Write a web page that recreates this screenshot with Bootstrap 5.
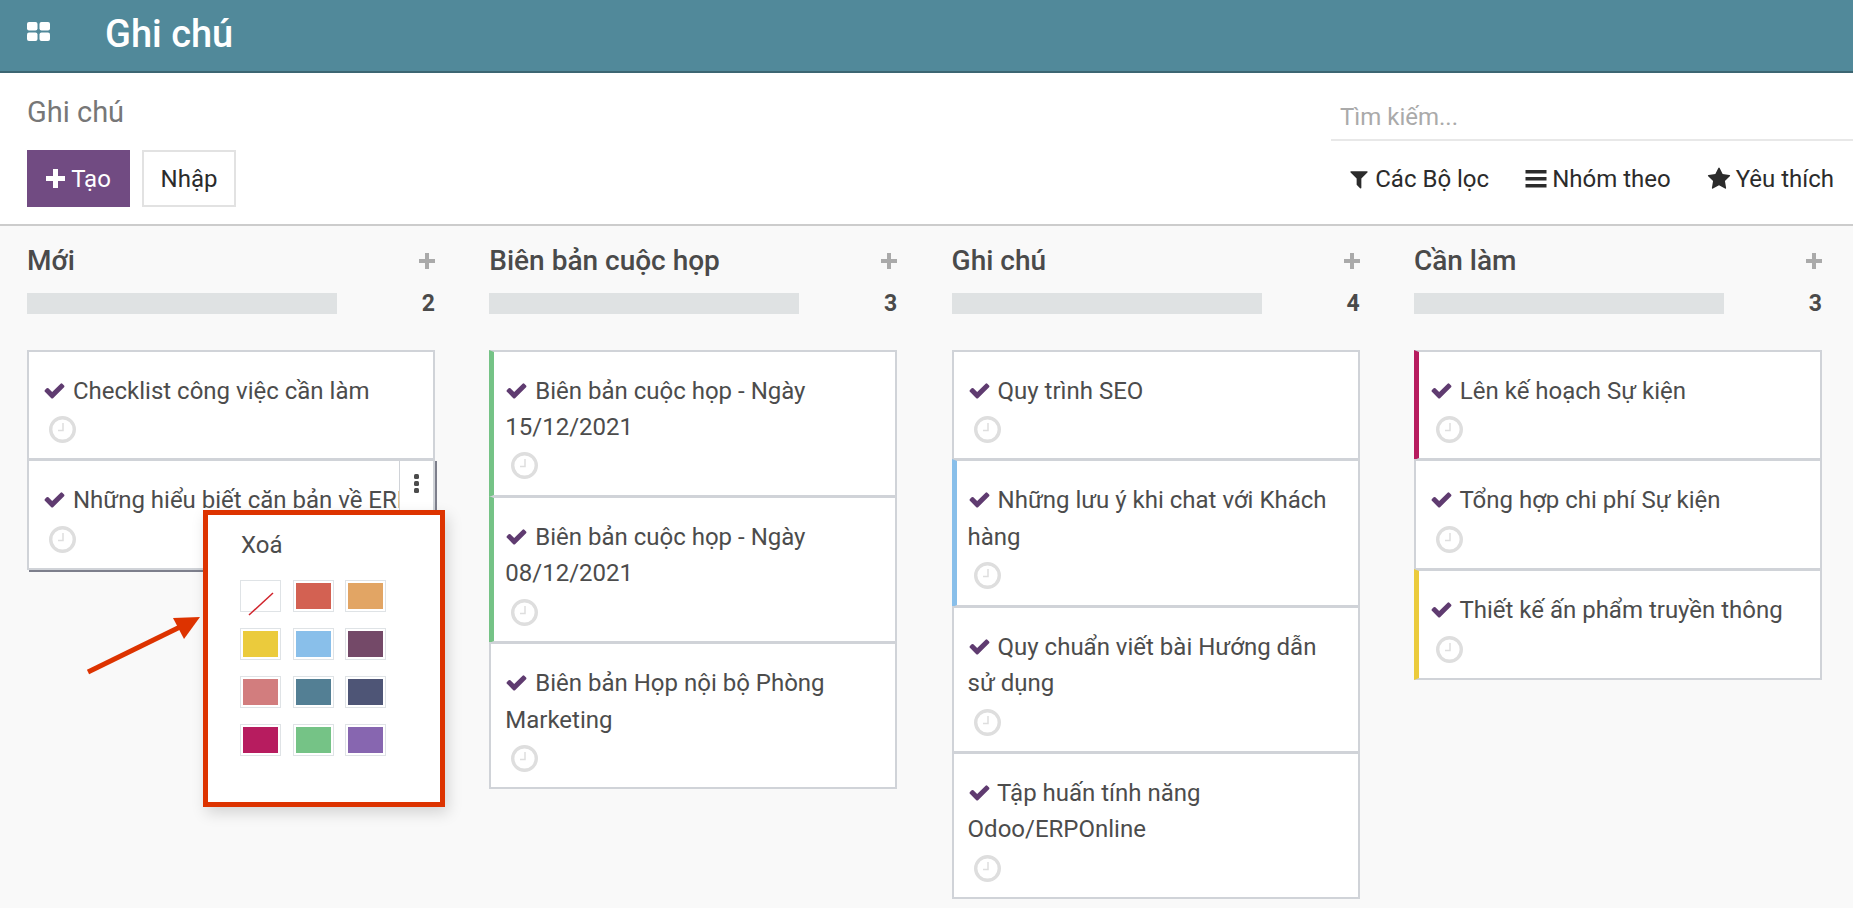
<!DOCTYPE html>
<html lang="vi">
<head>
<meta charset="utf-8">
<title>Ghi chú</title>
<link href="https://cdn.jsdelivr.net/npm/bootstrap@5.3.0/dist/css/bootstrap.min.css" rel="stylesheet">
<style>
html,body{height:908px;overflow:hidden}
body{font-family:Roboto,"Liberation Sans",sans-serif;background:#f9f9f9;color:#4c4c4c;font-size:24px}
.top-bar{height:73px;background:#51899a;border-bottom:2px solid #3c6672;padding:0 0 0 27px}
.apps-ico{width:23px;height:19px;margin-right:55px;margin-top:-9px}
.top-title{font-size:38px;font-weight:500;color:#fff;line-height:1;margin-top:-4px}
.ctrl{height:153px;background:#fff;border-bottom:2px solid #ccc;padding-left:27px}
.crumb{font-size:29px;color:#777;line-height:36px;padding-top:21px}
.btn-row{margin-top:20px}
.bt-main,.bt-alt{height:57px;border-radius:0;font-size:24px;display:flex;align-items:center;padding:0}
.bt-main,.bt-main:hover{background:#714b82;color:#fff;width:103px;justify-content:center;border:0;gap:6px}
.bt-alt,.bt-alt:hover{background:#fff;color:#2b2b2b;width:94px;justify-content:center;border:2px solid #e2e2e2}
.search-side{width:522px}
.search-field{height:68px;border-bottom:2px solid #e8e8e8;color:#aaa;font-size:24px;padding:26px 0 0 9px;line-height:36px}
.filter-row{height:76px;padding-right:19px;color:#2b2b2b;font-size:24px;gap:36px}
.filter-row span{display:flex;align-items:center;gap:5px}
.board{padding:0 0 0 27px;gap:54.300px}
.lane{width:408px;flex:none}
.lane-head{height:67px;padding-top:16px}
.lane-title{font-size:28px;font-weight:500;color:#4a4a4a;line-height:38px}
.plus-ico{margin-top:11px}
.lane-prog{height:21px;margin-bottom:35.500px}
.prog-track{width:310px;background:#dfe2e3}
.prog-num{font-size:23px;font-weight:700;color:#4a4a4a;line-height:21px}
.note{background:#fff;border:2px solid #d0d3d8;margin-bottom:-1px;padding:21px 14px 13.500px;position:relative;line-height:36.400px;color:#4c4c4c}
.note-tint{border-left-width:5px;padding-left:11px}
.tint-green{border-left-color:#75c386}
.tint-blue{border-left-color:#89bfea}
.tint-pink{border-left-color:#b71c5f}
.tint-yellow{border-left-color:#ebcb3c}
.note-hot{box-shadow:2px 2px 0 #7d7f8c}
.tick{width:23px;height:23px;margin-right:1px;vertical-align:-3px;fill:#5f3b70}
.clock{width:27px;height:27px;display:block;margin:7px 0 2px 6px}
.kebab{position:absolute;top:0;right:0;width:34px;height:58px;background:#fff;border-left:1px solid #d0d3d8;display:flex;flex-direction:column;align-items:center;padding-top:13px;gap:2px}
.kebab i{width:5px;height:5px;border-radius:1.500px;background:#4c4c4c;display:block}
.pop{position:absolute;left:174px;top:49px;width:242px;height:297px;background:#fff;border:5px solid #dd3300;box-shadow:3px 6px 14px rgba(0,0,0,.15);padding:12px 0 0 32px;z-index:5;line-height:36px}
.pop-del{margin-bottom:17px;padding-left:1px}
.swatches{display:grid;grid-template-columns:repeat(3,41px);grid-auto-rows:32px;column-gap:11.500px;row-gap:16px}
.swatch{border:1px solid #dfe3e6;padding:2px;background:#fff}
.swatch b{display:block;height:100%}
.arrow-mark{position:absolute;left:80px;top:610px;width:125px;height:70px;z-index:6}
</style>
</head>
<body>
<nav class="navbar top-bar d-flex justify-content-start align-items-center flex-nowrap">
  <svg class="apps-ico" viewBox="0 0 23 19"><rect width="10.500" height="8.500" rx="2" fill="#fff"/><rect x="12.500" width="10.500" height="8.500" rx="2" fill="#fff"/><rect y="10.500" width="10.500" height="8.500" rx="2" fill="#fff"/><rect x="12.500" y="10.500" width="10.500" height="8.500" rx="2" fill="#fff"/></svg>
  <div class="top-title">Ghi chú</div>
</nav>
<div class="ctrl d-flex justify-content-between">
  <div>
    <div class="crumb">Ghi chú</div>
    <div class="btn-row d-flex gap-2">
      <button class="btn bt-main"><svg width="19" height="19" viewBox="0 0 19 19"><path d="M7 0h5v7h7v5h-7v7H7v-7H0V7h7z" fill="#fff"/></svg>Tạo</button>
      <button class="btn bt-alt ms-1">Nhập</button>
    </div>
  </div>
  <div class="search-side">
    <div class="search-field">Tìm kiếm...</div>
    <div class="filter-row d-flex justify-content-end align-items-center">
      <span><svg width="22" height="22" viewBox="0 0 1792 1792" fill="#2b2b2b"><path d="M1595 295q17 41-14 70l-493 493v742q0 42-39 59-13 5-25 5-27 0-45-19l-256-256q-19-19-19-45v-486l-493-493q-31-29-14-70 17-39 59-39h1280q42 0 59 39z"/></svg>Các Bộ lọc</span>
      <span><svg width="22" height="18" viewBox="0 0 21 18" fill="#2b2b2b"><rect width="21" height="3.500"/><rect y="7" width="21" height="3.500"/><rect y="14" width="21" height="3.500"/></svg>Nhóm theo</span>
      <span><svg width="24" height="24" viewBox="0 0 1792 1792" fill="#2b2b2b"><path d="M1728 647q0 22-26 48l-363 354 86 500q1 7 1 20 0 21-10.500 35.500t-30.500 14.500q-19 0-40-12l-449-236-449 236q-22 12-40 12-21 0-31.500-14.500t-10.500-35.500q0-6 2-20l86-500-364-354q-25-27-25-48 0-37 56-46l502-73 225-455q19-41 49-41t49 41l225 455 502 73q56 9 56 46z"/></svg>Yêu thích</span>
    </div>
  </div>
</div>
<div class="board d-flex" id="board">
  <!-- lane 1 -->
  <section class="lane">
    <div class="lane-head d-flex justify-content-between align-items-start"><div class="lane-title">Mới</div><svg class="plus-ico" width="16" height="16" viewBox="0 0 16 16"><path d="M6 0h4v6h6v4h-6v6H6v-6H0V6h6z" fill="#aaa"/></svg></div>
    <div class="lane-prog d-flex justify-content-between"><div class="prog-track"></div><div class="prog-num">2</div></div>
    <div class="note"><svg class="tick" viewBox="0 0 1792 1792"><path d="M1671 566q0 40-28 68l-724 724-136 136q-28 28-68 28t-68-28l-136-136-362-362q-28-28-28-68t28-68l136-136q28-28 68-28t68 28l294 295 656-657q28-28 68-28t68 28l136 136q28 28 28 68z"/></svg> Checklist công việc cần làm<svg class="clock" viewBox="0 0 27 27"><circle cx="13.500" cy="13.500" r="11.800" fill="#fff" stroke="#dedede" stroke-width="3.400"/><path d="M14 7v7.500H9" fill="none" stroke="#dedede" stroke-width="1.500"/></svg></div>
    <div class="note note-hot"><svg class="tick" viewBox="0 0 1792 1792"><path d="M1671 566q0 40-28 68l-724 724-136 136q-28 28-68 28t-68-28l-136-136-362-362q-28-28-28-68t28-68l136-136q28-28 68-28t68 28l294 295 656-657q28-28 68-28t68 28l136 136q28 28 28 68z"/></svg> <span class="text-nowrap">Những hiểu biết căn bản về ERP</span><svg class="clock" viewBox="0 0 27 27"><circle cx="13.500" cy="13.500" r="11.800" fill="#fff" stroke="#dedede" stroke-width="3.400"/><path d="M14 7v7.500H9" fill="none" stroke="#dedede" stroke-width="1.500"/></svg>
      <div class="kebab"><i></i><i></i><i></i></div>
      <div class="pop">
        <div class="pop-del">Xoá</div>
        <div class="swatches">
          <div class="swatch"><svg width="100%" height="100%" viewBox="0 0 35 26" preserveAspectRatio="none"><path d="M6 25 L30 3" stroke="#d0232b" stroke-width="1.500"/></svg></div>
          <div class="swatch"><b style="background:#d36152"></b></div>
          <div class="swatch"><b style="background:#e2a564"></b></div>
          <div class="swatch"><b style="background:#ebcb3c"></b></div>
          <div class="swatch"><b style="background:#89bfea"></b></div>
          <div class="swatch"><b style="background:#744968"></b></div>
          <div class="swatch"><b style="background:#d27d7e"></b></div>
          <div class="swatch"><b style="background:#537f94"></b></div>
          <div class="swatch"><b style="background:#4e5576"></b></div>
          <div class="swatch"><b style="background:#b71c5f"></b></div>
          <div class="swatch"><b style="background:#75c386"></b></div>
          <div class="swatch"><b style="background:#8766b0"></b></div>
        </div>
      </div>
    </div>
  </section>
  <!-- lane 2 -->
  <section class="lane">
    <div class="lane-head d-flex justify-content-between align-items-start"><div class="lane-title">Biên bản cuộc họp</div><svg class="plus-ico" width="16" height="16" viewBox="0 0 16 16"><path d="M6 0h4v6h6v4h-6v6H6v-6H0V6h6z" fill="#aaa"/></svg></div>
    <div class="lane-prog d-flex justify-content-between"><div class="prog-track"></div><div class="prog-num">3</div></div>
    <div class="note note-tint tint-green"><svg class="tick" viewBox="0 0 1792 1792"><path d="M1671 566q0 40-28 68l-724 724-136 136q-28 28-68 28t-68-28l-136-136-362-362q-28-28-28-68t28-68l136-136q28-28 68-28t68 28l294 295 656-657q28-28 68-28t68 28l136 136q28 28 28 68z"/></svg> Biên bản cuộc họp - Ngày 15/12/2021<svg class="clock" viewBox="0 0 27 27"><circle cx="13.500" cy="13.500" r="11.800" fill="#fff" stroke="#dedede" stroke-width="3.400"/><path d="M14 7v7.500H9" fill="none" stroke="#dedede" stroke-width="1.500"/></svg></div>
    <div class="note note-tint tint-green"><svg class="tick" viewBox="0 0 1792 1792"><path d="M1671 566q0 40-28 68l-724 724-136 136q-28 28-68 28t-68-28l-136-136-362-362q-28-28-28-68t28-68l136-136q28-28 68-28t68 28l294 295 656-657q28-28 68-28t68 28l136 136q28 28 28 68z"/></svg> Biên bản cuộc họp - Ngày 08/12/2021<svg class="clock" viewBox="0 0 27 27"><circle cx="13.500" cy="13.500" r="11.800" fill="#fff" stroke="#dedede" stroke-width="3.400"/><path d="M14 7v7.500H9" fill="none" stroke="#dedede" stroke-width="1.500"/></svg></div>
    <div class="note"><svg class="tick" viewBox="0 0 1792 1792"><path d="M1671 566q0 40-28 68l-724 724-136 136q-28 28-68 28t-68-28l-136-136-362-362q-28-28-28-68t28-68l136-136q28-28 68-28t68 28l294 295 656-657q28-28 68-28t68 28l136 136q28 28 28 68z"/></svg> Biên bản Họp nội bộ Phòng Marketing<svg class="clock" viewBox="0 0 27 27"><circle cx="13.500" cy="13.500" r="11.800" fill="#fff" stroke="#dedede" stroke-width="3.400"/><path d="M14 7v7.500H9" fill="none" stroke="#dedede" stroke-width="1.500"/></svg></div>
  </section>
  <!-- lane 3 -->
  <section class="lane">
    <div class="lane-head d-flex justify-content-between align-items-start"><div class="lane-title">Ghi chú</div><svg class="plus-ico" width="16" height="16" viewBox="0 0 16 16"><path d="M6 0h4v6h6v4h-6v6H6v-6H0V6h6z" fill="#aaa"/></svg></div>
    <div class="lane-prog d-flex justify-content-between"><div class="prog-track"></div><div class="prog-num">4</div></div>
    <div class="note"><svg class="tick" viewBox="0 0 1792 1792"><path d="M1671 566q0 40-28 68l-724 724-136 136q-28 28-68 28t-68-28l-136-136-362-362q-28-28-28-68t28-68l136-136q28-28 68-28t68 28l294 295 656-657q28-28 68-28t68 28l136 136q28 28 28 68z"/></svg> Quy trình SEO<svg class="clock" viewBox="0 0 27 27"><circle cx="13.500" cy="13.500" r="11.800" fill="#fff" stroke="#dedede" stroke-width="3.400"/><path d="M14 7v7.500H9" fill="none" stroke="#dedede" stroke-width="1.500"/></svg></div>
    <div class="note note-tint tint-blue"><svg class="tick" viewBox="0 0 1792 1792"><path d="M1671 566q0 40-28 68l-724 724-136 136q-28 28-68 28t-68-28l-136-136-362-362q-28-28-28-68t28-68l136-136q28-28 68-28t68 28l294 295 656-657q28-28 68-28t68 28l136 136q28 28 28 68z"/></svg> Những lưu ý khi chat với Khách hàng<svg class="clock" viewBox="0 0 27 27"><circle cx="13.500" cy="13.500" r="11.800" fill="#fff" stroke="#dedede" stroke-width="3.400"/><path d="M14 7v7.500H9" fill="none" stroke="#dedede" stroke-width="1.500"/></svg></div>
    <div class="note"><svg class="tick" viewBox="0 0 1792 1792"><path d="M1671 566q0 40-28 68l-724 724-136 136q-28 28-68 28t-68-28l-136-136-362-362q-28-28-28-68t28-68l136-136q28-28 68-28t68 28l294 295 656-657q28-28 68-28t68 28l136 136q28 28 28 68z"/></svg> Quy chuẩn viết bài Hướng dẫn sử dụng<svg class="clock" viewBox="0 0 27 27"><circle cx="13.500" cy="13.500" r="11.800" fill="#fff" stroke="#dedede" stroke-width="3.400"/><path d="M14 7v7.500H9" fill="none" stroke="#dedede" stroke-width="1.500"/></svg></div>
    <div class="note"><svg class="tick" viewBox="0 0 1792 1792"><path d="M1671 566q0 40-28 68l-724 724-136 136q-28 28-68 28t-68-28l-136-136-362-362q-28-28-28-68t28-68l136-136q28-28 68-28t68 28l294 295 656-657q28-28 68-28t68 28l136 136q28 28 28 68z"/></svg> Tập huấn tính năng Odoo/ERPOnline<svg class="clock" viewBox="0 0 27 27"><circle cx="13.500" cy="13.500" r="11.800" fill="#fff" stroke="#dedede" stroke-width="3.400"/><path d="M14 7v7.500H9" fill="none" stroke="#dedede" stroke-width="1.500"/></svg></div>
  </section>
  <!-- lane 4 -->
  <section class="lane">
    <div class="lane-head d-flex justify-content-between align-items-start"><div class="lane-title">Cần làm</div><svg class="plus-ico" width="16" height="16" viewBox="0 0 16 16"><path d="M6 0h4v6h6v4h-6v6H6v-6H0V6h6z" fill="#aaa"/></svg></div>
    <div class="lane-prog d-flex justify-content-between"><div class="prog-track"></div><div class="prog-num">3</div></div>
    <div class="note note-tint tint-pink"><svg class="tick" viewBox="0 0 1792 1792"><path d="M1671 566q0 40-28 68l-724 724-136 136q-28 28-68 28t-68-28l-136-136-362-362q-28-28-28-68t28-68l136-136q28-28 68-28t68 28l294 295 656-657q28-28 68-28t68 28l136 136q28 28 28 68z"/></svg> Lên kế hoạch Sự kiện<svg class="clock" viewBox="0 0 27 27"><circle cx="13.500" cy="13.500" r="11.800" fill="#fff" stroke="#dedede" stroke-width="3.400"/><path d="M14 7v7.500H9" fill="none" stroke="#dedede" stroke-width="1.500"/></svg></div>
    <div class="note"><svg class="tick" viewBox="0 0 1792 1792"><path d="M1671 566q0 40-28 68l-724 724-136 136q-28 28-68 28t-68-28l-136-136-362-362q-28-28-28-68t28-68l136-136q28-28 68-28t68 28l294 295 656-657q28-28 68-28t68 28l136 136q28 28 28 68z"/></svg> Tổng hợp chi phí Sự kiện<svg class="clock" viewBox="0 0 27 27"><circle cx="13.500" cy="13.500" r="11.800" fill="#fff" stroke="#dedede" stroke-width="3.400"/><path d="M14 7v7.500H9" fill="none" stroke="#dedede" stroke-width="1.500"/></svg></div>
    <div class="note note-tint tint-yellow"><svg class="tick" viewBox="0 0 1792 1792"><path d="M1671 566q0 40-28 68l-724 724-136 136q-28 28-68 28t-68-28l-136-136-362-362q-28-28-28-68t28-68l136-136q28-28 68-28t68 28l294 295 656-657q28-28 68-28t68 28l136 136q28 28 28 68z"/></svg> Thiết kế ấn phẩm truyền thông<svg class="clock" viewBox="0 0 27 27"><circle cx="13.500" cy="13.500" r="11.800" fill="#fff" stroke="#dedede" stroke-width="3.400"/><path d="M14 7v7.500H9" fill="none" stroke="#dedede" stroke-width="1.500"/></svg></div>
  </section>
</div>
<svg class="arrow-mark" viewBox="0 0 125 70"><path d="M8 62 L100 17" stroke="#dd3300" stroke-width="5" fill="none"/><path d="M120 7 L93 8 L104 29z" fill="#dd3300"/></svg>
<script src="https://cdn.jsdelivr.net/npm/bootstrap@5.3.0/dist/js/bootstrap.bundle.min.js"></script>
</body>
</html>
